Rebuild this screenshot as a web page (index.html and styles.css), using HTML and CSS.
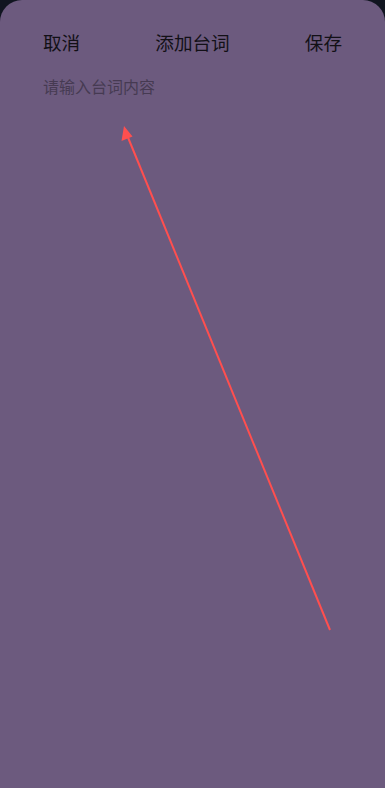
FILE: index.html
```html
<!DOCTYPE html>
<html lang="zh">
<head>
<meta charset="utf-8">
<link rel="stylesheet" href="styles.css">
</head>
<body>
<div class="sheet">
  <div class="header">
    <span class="btn">取消</span>
    <span class="title">添加台词</span>
    <span class="btn">保存</span>
  </div>
  <div class="input">请输入台词内容</div>
  <svg class="arrow" width="385" height="788" viewBox="0 0 385 788">
    <line x1="330" y1="630" x2="127" y2="135" stroke="#ff4f4f" stroke-width="2"/>
    <polygon points="124,126 121.5,141 132.5,136.5" fill="#ff4f4f"/>
  </svg>
</div>
</body>
</html>
```
FILE: styles.css
```css
html, body {
  margin: 0;
  padding: 0;
  background: #111520;
}
.sheet {
  position: relative;
  width: 385px;
  height: 788px;
  background: #6c5a7e;
  border-radius: 22px 22px 0 0;
  overflow: hidden;
  font-family: "Noto Sans CJK SC", "Noto Sans", sans-serif;
}
.header {
  display: flex;
  justify-content: space-between;
  align-items: center;
  padding: 28px 43px 0 43px;
  height: 26px;
  font-size: 18.6px;
  color: #121016;
}
.input {
  padding: 22px 43px 0 43px;
  font-size: 16px;
  line-height: 20px;
  color: #463a52;
}
.arrow {
  position: absolute;
  left: 0;
  top: 0;
}
```
